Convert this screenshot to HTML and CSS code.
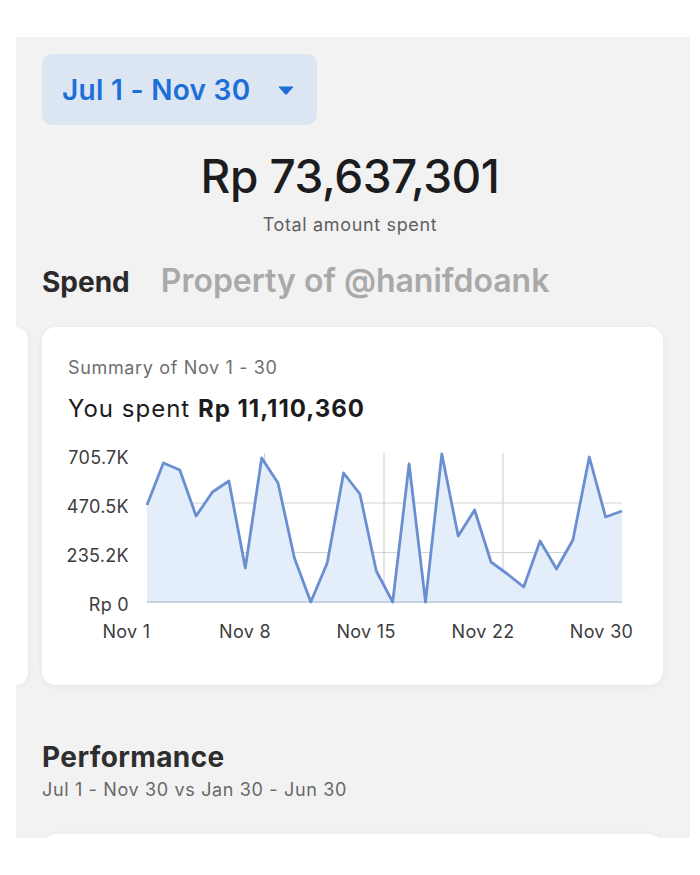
FILE: index.html
```html
<!DOCTYPE html>
<html lang="en">
<head>
    <meta charset="UTF-8">
    <meta name="viewport" content="width=device-width, initial-scale=1.0">
    <title>Ads spending</title>
    <link rel="stylesheet" href="styles.css">
</head>
<body>
    <div class="screen">
        <button class="range-button">
            <span>Jul 1 - Nov 30</span>
            <svg class="caret" width="16" height="9" viewBox="0 0 16 9">
                <path d="M1.5 0.5 H14.5 Q16 0.5 15 1.6 L9.1 8 Q8 9 6.9 8 L1 1.6 Q0 0.5 1.5 0.5 Z" fill="#1d6fd8"/>
            </svg>
        </button>

        <div class="total">
            <div class="total-amount">Rp 73,637,301</div>
            <div class="total-label">Total amount spent</div>
        </div>

        <div class="section-row">
            <h2 class="section-title">Spend</h2>
            <span class="watermark">Property of @hanifdoank</span>
        </div>

        <div class="cards">
            <div class="card card-peek"></div>
            <div class="card summary-card">
                <div class="summary-title">Summary of Nov 1 - 30</div>
                <div class="summary-value">You spent <strong>Rp 11,110,360</strong></div>

                <!-- viewBox uses page coordinates so points read like the screenshot -->
                <svg class="chart" width="569" height="210" viewBox="68 440 569 210">
                    <g class="grid">
                        <line x1="147" y1="503" x2="622" y2="503"/>
                        <line x1="147" y1="552.5" x2="622" y2="552.5"/>
                        <line x1="264.5" y1="453" x2="264.5" y2="602"/>
                        <line x1="384" y1="453" x2="384" y2="602"/>
                        <line x1="503" y1="453" x2="503" y2="602"/>
                    </g>
                    <polygon class="area" points="147,602 147,505 163.4,463 179.8,470 196.1,516 212.5,492 228.9,481 245.3,568 261.7,458 278,483 294.4,558 310.8,602 327.2,563 343.6,473 359.9,494 376.3,571 392.7,602 409.1,464 425.5,602 441.8,454 458.2,536 474.6,510 491,562 507.4,574 523.7,587 540.1,541 556.5,569 572.9,540 589.3,457 605.6,517 622,511 622,602"/>
                    <line class="axis" x1="147" y1="602" x2="622" y2="602"/>
                    <polyline class="line" points="147,505 163.4,463 179.8,470 196.1,516 212.5,492 228.9,481 245.3,568 261.7,458 278,483 294.4,558 310.8,602 327.2,563 343.6,473 359.9,494 376.3,571 392.7,602 409.1,464 425.5,602 441.8,454 458.2,536 474.6,510 491,562 507.4,574 523.7,587 540.1,541 556.5,569 572.9,540 589.3,457 605.6,517 622,511"/>
                    <g class="y-labels">
                        <text x="129" y="464">705.7K</text>
                        <text x="129" y="513">470.5K</text>
                        <text x="129" y="562">235.2K</text>
                        <text x="129" y="611">Rp 0</text>
                    </g>
                    <g class="x-labels">
                        <text x="126.5" y="638">Nov 1</text>
                        <text x="245" y="638">Nov 8</text>
                        <text x="366" y="638">Nov 15</text>
                        <text x="483" y="638">Nov 22</text>
                        <text x="601.5" y="638">Nov 30</text>
                    </g>
                </svg>
            </div>
        </div>

        <h2 class="perf-title">Performance</h2>
        <div class="perf-sub">Jul 1 - Nov 30 vs Jan 30 - Jun 30</div>

        <div class="card perf-card"></div>
    </div>
</body>
</html>
```

FILE: styles.css
```css
body {
    margin: 0;
    background-color: #ffffff;
    font-family: Inter, "Liberation Sans", sans-serif;
}
.screen {
    margin: 37px 10px 0 16px;
    height: 801px;
    overflow: hidden;
    background-color: #f2f2f2;
    padding: 17px 0 0 26px;
    box-sizing: border-box;
}
.range-button {
    display: flex;
    align-items: center;
    gap: 27px;
    width: 275px;
    height: 71px;
    padding: 0 0 0 20px;
    border: none;
    border-radius: 10px;
    background-color: #dce6f3;
    color: #1d6fd8;
    font-family: inherit;
    font-size: 28px;
    font-weight: 600;
    letter-spacing: 0.3px;
    cursor: pointer;
}
.caret {
    margin-top: 2px;
}
.total {
    margin: 24px 32px 0 0;
    text-align: center;
}
.total-amount {
    font-size: 46px;
    line-height: 55px;
    font-weight: 500;
    color: #1c1c1e;
    letter-spacing: -0.5px;
}
.total-label {
    margin-top: 10px;
    font-size: 18px;
    line-height: 22px;
    color: #5f5f5f;
    letter-spacing: 0.65px;
}
.section-row {
    display: flex;
    align-items: baseline;
    gap: 31px;
    margin-top: 26px;
    height: 38px;
}
.section-title {
    margin: 0;
    font-size: 28px;
    line-height: 38px;
    font-weight: 700;
    color: #2a2a2a;
}
.watermark {
    font-size: 32px;
    line-height: 38px;
    font-weight: 600;
    color: #a9a9a9;
}
.cards {
    display: flex;
    gap: 14px;
    margin: 27px 0 0 -26px;
}
.card {
    background-color: #ffffff;
    border-radius: 14px;
    box-shadow: 0 1px 6px rgba(0, 0, 0, 0.06);
}
.card-peek {
    width: 12px;
    height: 358px;
    border-radius: 0 14px 14px 0;
}
.summary-card {
    width: 621px;
    height: 358px;
    padding: 30px 26px 0;
    box-sizing: border-box;
}
.summary-title {
    font-size: 18px;
    line-height: 22px;
    color: #6e6e6e;
    letter-spacing: 0.65px;
}
.summary-value {
    margin-top: 15px;
    font-size: 24px;
    line-height: 30px;
    color: #1c1c1e;
    letter-spacing: 1px;
}
.summary-value strong {
    font-weight: 700;
}
.chart {
    display: block;
    margin-top: 16px;
    overflow: visible;
}
.grid line {
    stroke: #d3d3d3;
    stroke-width: 1.2;
}
.axis {
    stroke: #b9c3d4;
    stroke-width: 1.5;
}
.area {
    fill: #e4eefb;
}
.line {
    fill: none;
    stroke: #6a8fd1;
    stroke-width: 2.8;
    stroke-linejoin: round;
}
.chart text {
    font-family: Inter, "Liberation Sans", sans-serif;
    font-size: 18px;
    fill: #3d3d3d;
    letter-spacing: 0.3px;
}
.y-labels text {
    text-anchor: end;
}
.x-labels text {
    text-anchor: middle;
}
.perf-title {
    margin: 56px 0 0;
    font-size: 28px;
    line-height: 32px;
    font-weight: 700;
    color: #2e2e2e;
    letter-spacing: 0.4px;
}
.perf-sub {
    margin-top: 6px;
    font-size: 18px;
    line-height: 22px;
    color: #686868;
    letter-spacing: 0.65px;
}
.perf-card {
    width: 621px;
    height: 200px;
    margin-top: 33px;
}
```
